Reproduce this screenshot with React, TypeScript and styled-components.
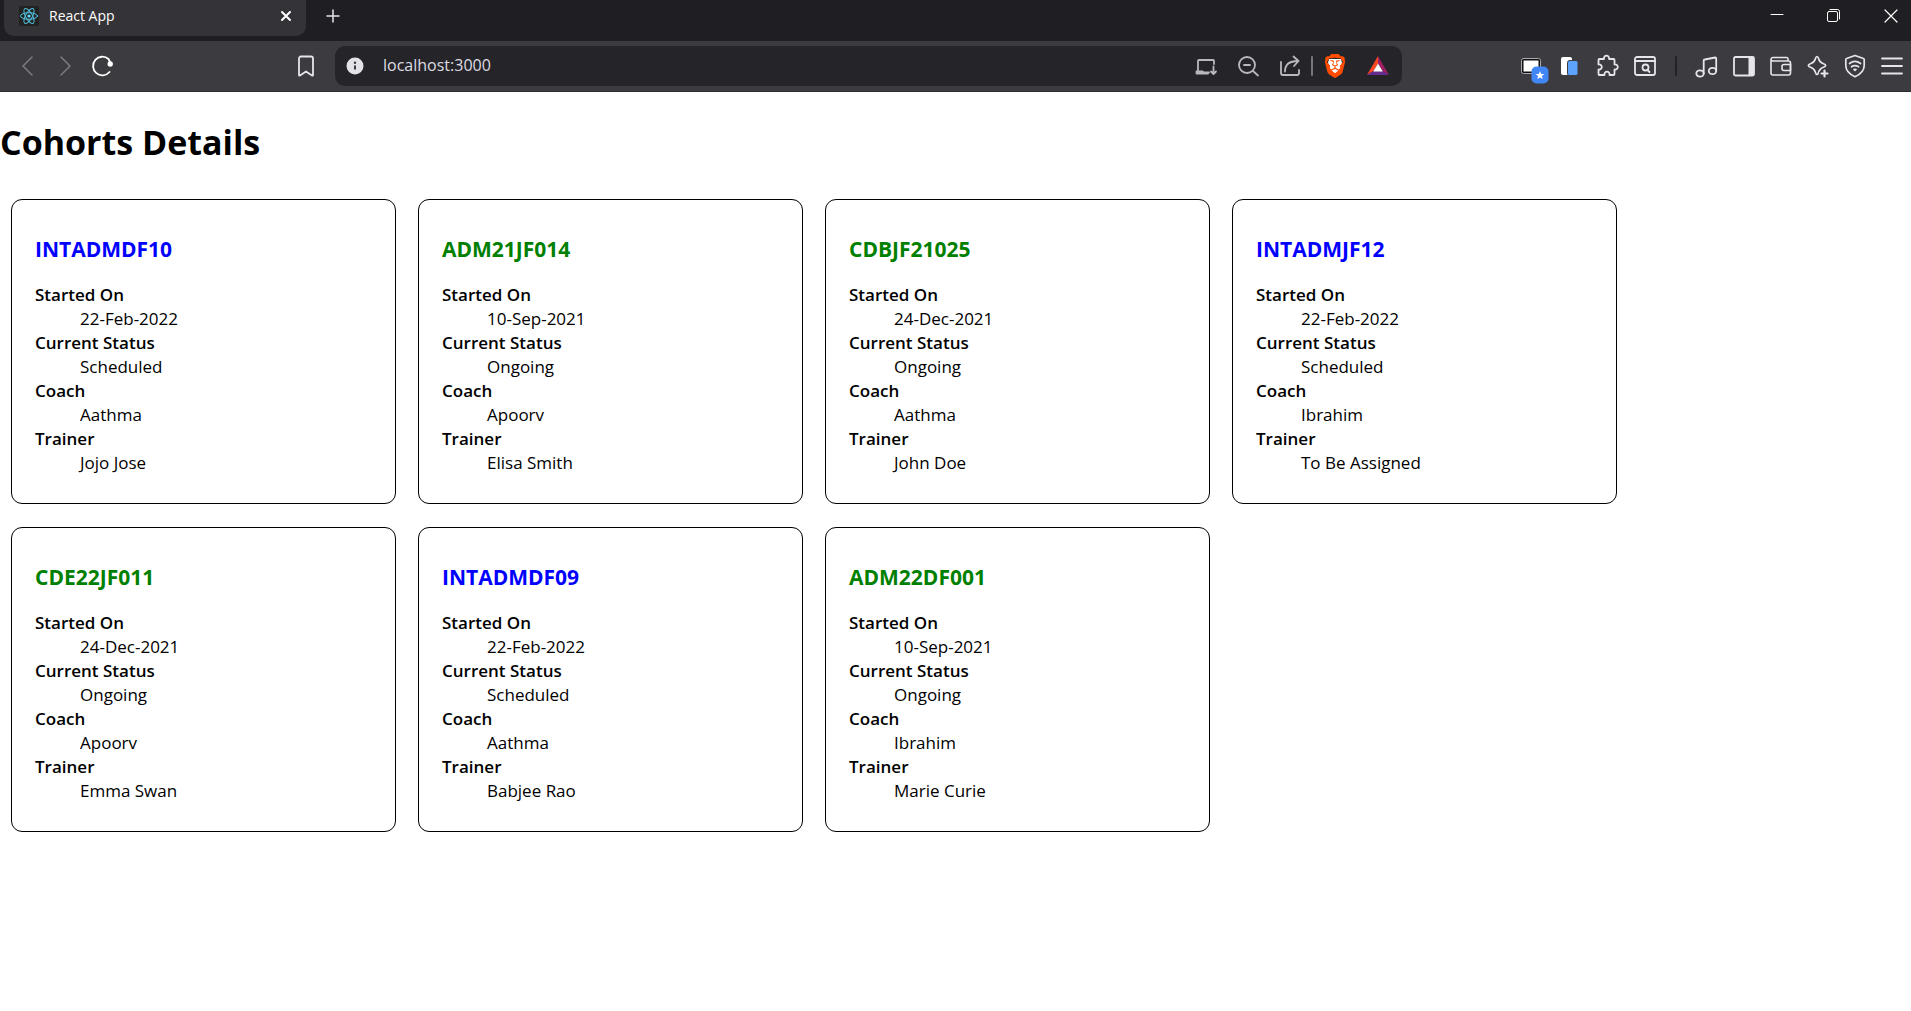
import React from "react";
import styled, { createGlobalStyle } from "styled-components";
import { SiBrave } from "react-icons/si";

const GlobalStyle = createGlobalStyle`
  *, *::before, *::after { box-sizing: border-box; }
  body {
    margin: 0;
    background: #fff;
    color: #000;
    font-family: "Segoe UI", "Open Sans", "Noto Sans", sans-serif;
    font-size: 17px;
    line-height: 24px;
  }
`;

/* ---------- browser chrome ---------- */

const TabStrip = styled.div`
  display: flex;
  align-items: flex-start;
  height: 41px;
  padding-left: 4px;
  background: #1f1e23;
`;

const Tab = styled.div`
  display: flex;
  align-items: center;
  width: 302px;
  height: 36px;
  padding: 0 8px 4px 15px;
  gap: 10px;
  border-radius: 0 0 10px 10px;
  background: #343338;
`;

const TabTitle = styled.span`
  flex: 1;
  color: #fff;
  font-size: 14px;
  line-height: 20px;
`;

const IconButton = styled.button<{ $width?: number; $height?: number; $color?: string }>`
  display: flex;
  flex: none;
  align-items: center;
  justify-content: center;
  width: ${(p) => p.$width ?? 38}px;
  height: ${(p) => p.$height ?? 32}px;
  padding: 0;
  border: 0;
  background: none;
  color: ${(p) => p.$color ?? "#e6e5ea"};
`;

const WindowControls = styled.div`
  display: flex;
  gap: 17px;
  margin-left: auto;
`;

const Toolbar = styled.div`
  display: flex;
  align-items: center;
  height: 51px;
  padding: 0 1px 0 8px;
  border-bottom: 1px solid #2c2b30;
  background: #3c3b40;
`;

const Group = styled.div`
  display: flex;
  align-items: center;
`;

const BookmarkSlot = styled.div`
  display: flex;
  justify-content: flex-end;
  width: 203px;
`;

const AddressBar = styled.form`
  display: flex;
  flex: 1;
  align-items: center;
  height: 40px;
  margin: 0 110px 0 10px;
  padding: 0 3px 0 1px;
  border-radius: 10px;
  background: #252429;
`;

const AddressInput = styled.input`
  flex: 1;
  min-width: 0;
  height: 32px;
  padding: 0 0 2px 9px;
  border: 0;
  outline: 0;
  background: none;
  color: #dddce2;
  font: inherit;
  font-size: 16px;
`;

const Divider = styled.span<{ $space: number; $color: string }>`
  flex: none;
  width: 2px;
  height: 20px;
  margin: 0 ${(p) => p.$space}px;
  border-radius: 1px;
  background: ${(p) => p.$color};
`;

type IconProps = { children: React.ReactNode; size?: number; line?: number };

const Svg = styled.svg`
  display: block;
  overflow: visible;
`;

function Icon({ children, size = 24, line = 1.5 }: IconProps) {
  return (
    <Svg
      width={size}
      height={size}
      viewBox={`0 0 ${size} ${size}`}
      fill="none"
      stroke="currentColor"
      strokeWidth={line}
      strokeLinecap="round"
      strokeLinejoin="round"
      aria-hidden="true"
    >
      {children}
    </Svg>
  );
}

function ReactFavicon() {
  return (
    <Icon size={20} line={1}>
      <rect width="20" height="20" rx="2" fill="#222" stroke="none" />
      <g stroke="#53c1de">
        <ellipse cx="10" cy="10" rx="8.5" ry="3.3" />
        <ellipse cx="10" cy="10" rx="8.5" ry="3.3" transform="rotate(60 10 10)" />
        <ellipse cx="10" cy="10" rx="8.5" ry="3.3" transform="rotate(120 10 10)" />
      </g>
      <circle cx="10" cy="10" r="1.6" fill="#61dafb" stroke="none" />
    </Icon>
  );
}

function BrowserTabs() {
  return (
    <TabStrip>
      <Tab>
        <ReactFavicon />
        <TabTitle>React App</TabTitle>
        <IconButton $width={24} $height={24} $color="#fff" aria-label="Close tab">
          <Icon size={16} line={2}>
            <path d="M4 4l8 8M12 4l-8 8" />
          </Icon>
        </IconButton>
      </Tab>
      <IconButton $width={54} aria-label="New tab">
        <Icon size={16}>
          <path d="M8 2v12M2 8h12" />
        </Icon>
      </IconButton>
      <WindowControls>
        <IconButton $width={40} $color="#fff" aria-label="Minimize">
          <Icon size={16} line={1}>
            <path d="M2 6.5h12" />
          </Icon>
        </IconButton>
        <IconButton $width={40} $color="#fff" aria-label="Restore">
          <Icon size={16} line={1}>
            <rect x="1.5" y="3.5" width="10" height="10" rx="1.5" />
            <path d="M4 1.5h7.5a2 2 0 0 1 2 2V11" />
          </Icon>
        </IconButton>
        <IconButton $width={40} $color="#fff" aria-label="Close window">
          <Icon size={16} line={1.2}>
            <path d="M2 2l12 12M14 2L2 14" />
          </Icon>
        </IconButton>
      </WindowControls>
    </TabStrip>
  );
}

function BrowserToolbar() {
  return (
    <Toolbar>
      <IconButton $color="#7c7b80" aria-label="Back">
        <Icon>
          <path d="M17 3l-9 9 9 9" />
        </Icon>
      </IconButton>
      <IconButton $color="#7c7b80" aria-label="Forward">
        <Icon>
          <path d="M8 3l9 9-9 9" />
        </Icon>
      </IconButton>
      <IconButton $color="#fff" aria-label="Reload">
        <Icon line={1.8}>
          <path d="M17.5 5A9.3 9.3 0 1 0 18.5 18M17.5 5l2 4" />
          <circle cx="19.2" cy="10" r="2.7" fill="currentColor" stroke="none" />
        </Icon>
      </IconButton>
      <BookmarkSlot>
        <IconButton aria-label="Bookmark this page">
          <Icon line={1.8}>
            <path d="M5 4.5a2 2 0 0 1 2-2h10a2 2 0 0 1 2 2v16.500q0 1-1 .5L12 17.500l-6 4q-1 .5-1-.5z" />
          </Icon>
        </IconButton>
      </BookmarkSlot>
      <AddressBar onSubmit={(e) => e.preventDefault()}>
        <IconButton type="button" aria-label="Site information">
          <Icon>
            <circle cx="12" cy="12" r="8.5" fill="#e3e2e9" stroke="none" />
            <path d="M12 11.5v4" stroke="#3c3b40" strokeWidth="2" strokeLinecap="butt" />
            <circle cx="12" cy="8.8" r="1.2" fill="#3c3b40" stroke="none" />
          </Icon>
        </IconButton>
        <AddressInput aria-label="Address" defaultValue="localhost:3000" />
        <IconButton type="button" $width={42} $color="#b9b8be" aria-label="Install app">
          <Icon line={1.8}>
            <path d="M4 16V7a1 1 0 0 1 1-1h14a1 1 0 0 1 1 1v3M2.5 17.500h6l1.500 1h5M2.5 17.500v2h11.500" />
            <path d="M19.5 12.500v7M17 17.500l2.500 2.500 2.500-2.500" />
          </Icon>
        </IconButton>
        <IconButton type="button" $width={42} $color="#b9b8be" aria-label="Zoom out">
          <Icon line={1.8}>
            <circle cx="11" cy="11" r="8" />
            <path d="M17 17l5 4.500M8 11h6" />
          </Icon>
        </IconButton>
        <IconButton type="button" $width={42} $color="#b9b8be" aria-label="Share">
          <Icon line={1.8}>
            <path d="M3 8v11a2 2 0 0 0 2 2h14a2 2 0 0 0 2-2v-3" />
            <path d="M7 17.500C7 11 11 7 20 7M15.500 2.500L20.500 7 16 12" />
          </Icon>
        </IconButton>
        <Divider $space={0} $color="#77767c" />
        <IconButton type="button" $width={44} aria-label="Brave Shields">
          <Icon>
            <path d="M6 5h12l1 4-2 7-5 5-5-5-2-7z" fill="#fff" stroke="none" />
            <SiBrave size={24} color="#ff4c00" />
          </Icon>
        </IconButton>
        <IconButton type="button" $width={42} aria-label="Brave Rewards">
          <Icon>
            <g stroke="none">
              <path d="M12 2L1 21l6.500-4L12 9.500z" fill="#ff4724" />
              <path d="M12 2l11 19-6.500-4L12 9.500z" fill="#9e1f63" />
              <path d="M1 21h22l-6.500-4h-9z" fill="#662d91" />
              <path d="M12 9.500L16.800 17.500H7.200z" fill="#fff" />
            </g>
          </Icon>
        </IconButton>
      </AddressBar>
      <Group>
        <IconButton aria-label="Screen capture extension">
          <Icon>
            <rect x="2.500" y="4.500" width="19" height="15" rx="2" fill="#111" stroke="#aaa9ae" strokeWidth="1" />
            <rect x="4.500" y="6.500" width="15" height="11" fill="#fff" stroke="none" />
            <rect x="12.500" y="12.500" width="17" height="17" rx="5" fill="#4285f4" stroke="none" />
            <path
              d="M21 17l1.200 2.900 3.100.2-2.400 2 .8 3L21 23.500l-2.700 1.600.8-3-2.400-2 3.100-.2z"
              fill="#fff"
              stroke="none"
            />
          </Icon>
        </IconButton>
        <IconButton aria-label="Tab manager extension">
          <Icon>
            <rect x="4" y="3" width="11" height="18" rx="2" fill="#fff" stroke="none" />
            <rect x="10.500" y="6.500" width="10.500" height="15" rx="2" fill="#5ea3fb" stroke="#3c3b40" strokeWidth="1" />
          </Icon>
        </IconButton>
        <IconButton aria-label="Extensions">
          <Icon line={1.8}>
            <path d="M4.500 5H9a2.600 2.600 0 1 1 5 0h4.500a1 1 0 0 1 1 1v4.500a2.600 2.600 0 1 1 0 5V20a1 1 0 0 1-1 1h-4a2.600 2.600 0 1 0-5 0h-5a1 1 0 0 1-1-1v-4.500a2.600 2.600 0 1 0 0-5V6a1 1 0 0 1 1-1z" />
          </Icon>
        </IconButton>
        <IconButton aria-label="Search tabs">
          <Icon line={1.8}>
            <rect x="2" y="3" width="20" height="18" rx="2" />
            <path d="M2 7h20M14.500 16l2 2" />
            <circle cx="12.500" cy="13.500" r="3" />
          </Icon>
        </IconButton>
      </Group>
      <Divider $space={11} $color="#222126" />
      <Group>
        <IconButton $width={37} aria-label="Playlist">
          <Icon line={1.8}>
            <ellipse cx="5" cy="19.500" rx="3.700" ry="3.200" />
            <ellipse cx="17.500" cy="17" rx="3.700" ry="3.200" />
            <path d="M8.700 19.500V6.500a1 1 0 0 1 1-1l10.500-2a1 1 0 0 1 1 1V17" />
          </Icon>
        </IconButton>
        <IconButton $width={37} aria-label="Sidebar">
          <Icon line={1.8}>
            <rect x="2" y="3" width="20" height="18.500" rx="1.500" />
            <path d="M16.500 3H21a1 1 0 0 1 1 1v16.500a1 1 0 0 1-1 1h-4.500z" fill="currentColor" stroke="none" />
          </Icon>
        </IconButton>
        <IconButton $width={37} aria-label="Wallet">
          <Icon line={1.6}>
            <path d="M19 6.500V5a1.500 1.500 0 0 0-1.500-1.500H4A2 2 0 0 0 2 5.500V19a2 2 0 0 0 2 2h15.500a2 2 0 0 0 2-2V9a2 2 0 0 0-2-2H3.500A1.500 1.500 0 0 1 2 5.500" />
            <path d="M21.500 10.500H15a2 2 0 0 0-2 2v2a2 2 0 0 0 2 2h6.500z" />
          </Icon>
        </IconButton>
        <IconButton $width={37} aria-label="Leo AI">
          <Icon line={1.7}>
            <path d="M11 2.500c1 0 1.300 1.200 1.700 2.500.9 3 1.600 3.600 4.300 4.500 1.500.5 2.700.9 2.700 2s-1.200 1.500-2.700 2c-2.700.9-3.400 1.500-4.300 4.500-.4 1.300-.7 2.500-1.700 2.500s-1.300-1.200-1.700-2.500c-.9-3-1.600-3.600-4.300-4.500-1.500-.5-2.700-.9-2.700-2s1.200-1.500 2.700-2c2.700-.9 3.400-1.500 4.300-4.500.4-1.300.7-2.500 1.700-2.500z" />
            <path d="M18.500 16.500v6M15.500 19.500h6" stroke="#3c3b40" strokeWidth="5" />
            <path d="M18.500 16.500v6M15.500 19.500h6" strokeWidth="2.200" />
          </Icon>
        </IconButton>
        <IconButton $width={37} aria-label="VPN">
          <Icon line={1.7}>
            <path d="M12 1.500l8.500 3a1 1 0 0 1 .7 1v6c0 5.500-4.200 9-9.200 11.200C7 20.500 2.800 17 2.800 11.500v-6a1 1 0 0 1 .7-1z" />
            <path d="M6.500 9.500c3.500-2.600 7.500-2.600 11 0M8.500 12.800c2.300-1.600 4.700-1.600 7 0" />
            <path d="M9.800 15.200c1.400-1 3-1 4.400 0L12 17.500z" fill="currentColor" stroke="none" />
          </Icon>
        </IconButton>
        <IconButton $width={37} aria-label="Menu">
          <Icon line={1.8}>
            <path d="M2 4.500h20M2 12h20M2 19.500h20" />
          </Icon>
        </IconButton>
      </Group>
    </Toolbar>
  );
}

/* ---------- page ---------- */

const PageTitle = styled.h1`
  margin: 26px 0 22px;
  font-size: 34px;
  font-weight: 700;
  line-height: 48px;
`;

const CardList = styled.main`
  display: flex;
  flex-wrap: wrap;
  gap: 23px 22px;
  padding: 11px;
`;

const Card = styled.article`
  width: 385px;
  padding: 12px 23px 10px;
  border: 1px solid #000;
  border-radius: 11px;
`;

const CardTitle = styled.h3<{ $ongoing: boolean }>`
  margin: 23px 0 20px;
  color: ${(p) => (p.$ongoing ? "green" : "blue")};
  font-size: 21px;
  font-weight: 700;
  line-height: 28px;
`;

const Details = styled.dl`
  margin: 0 0 18px;
`;

const Term = styled.dt`
  font-weight: 600;
`;

const Value = styled.dd`
  margin: 0 0 0 45px;
`;

type Cohort = {
  code: string;
  startedOn: string;
  status: "Scheduled" | "Ongoing";
  coach: string;
  trainer: string;
};

const cohorts: Cohort[] = [
  { code: "INTADMDF10", startedOn: "22-Feb-2022", status: "Scheduled", coach: "Aathma", trainer: "Jojo Jose" },
  { code: "ADM21JF014", startedOn: "10-Sep-2021", status: "Ongoing", coach: "Apoorv", trainer: "Elisa Smith" },
  { code: "CDBJF21025", startedOn: "24-Dec-2021", status: "Ongoing", coach: "Aathma", trainer: "John Doe" },
  { code: "INTADMJF12", startedOn: "22-Feb-2022", status: "Scheduled", coach: "Ibrahim", trainer: "To Be Assigned" },
  { code: "CDE22JF011", startedOn: "24-Dec-2021", status: "Ongoing", coach: "Apoorv", trainer: "Emma Swan" },
  { code: "INTADMDF09", startedOn: "22-Feb-2022", status: "Scheduled", coach: "Aathma", trainer: "Babjee Rao" },
  { code: "ADM22DF001", startedOn: "10-Sep-2021", status: "Ongoing", coach: "Ibrahim", trainer: "Marie Curie" },
];

function CohortCard({ cohort }: { cohort: Cohort }) {
  return (
    <Card>
      <CardTitle $ongoing={cohort.status === "Ongoing"}>{cohort.code}</CardTitle>
      <Details>
        <Term>Started On</Term>
        <Value>{cohort.startedOn}</Value>
        <Term>Current Status</Term>
        <Value>{cohort.status}</Value>
        <Term>Coach</Term>
        <Value>{cohort.coach}</Value>
        <Term>Trainer</Term>
        <Value>{cohort.trainer}</Value>
      </Details>
    </Card>
  );
}

export default function App() {
  return (
    <>
      <GlobalStyle />
      <header>
        <BrowserTabs />
        <BrowserToolbar />
      </header>
      <PageTitle>Cohorts Details</PageTitle>
      <CardList>
        {cohorts.map((cohort) => (
          <CohortCard key={cohort.code} cohort={cohort} />
        ))}
      </CardList>
    </>
  );
}
